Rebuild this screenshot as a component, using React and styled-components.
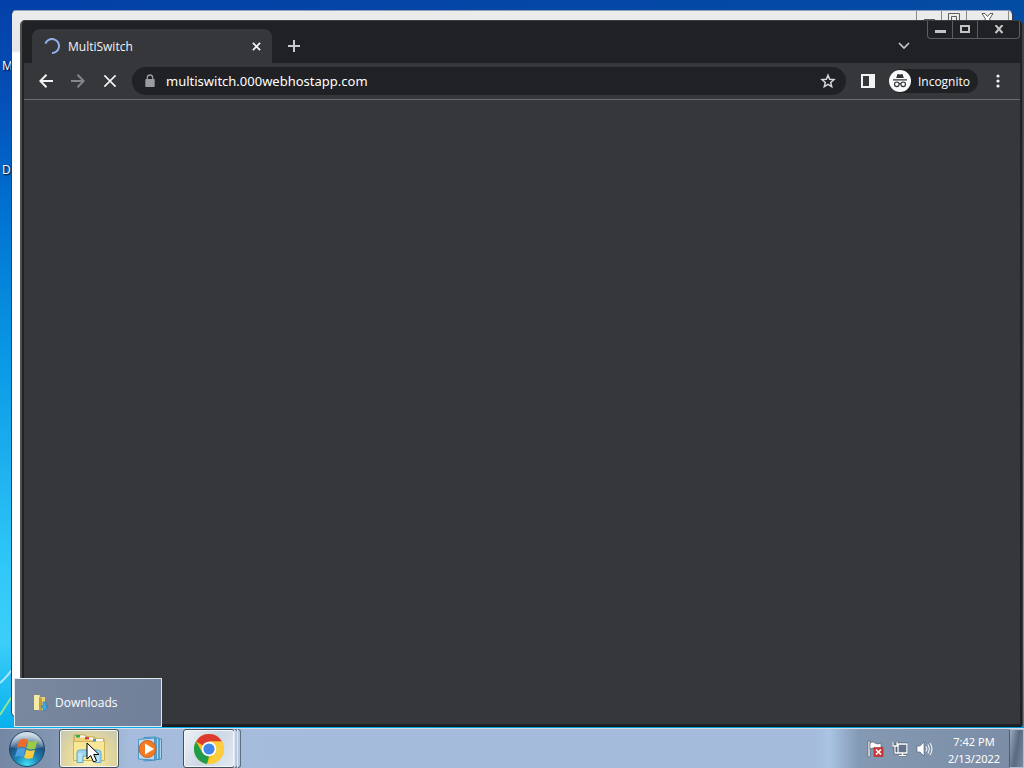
import React from 'react';
import styled, { createGlobalStyle, keyframes } from 'styled-components';

const GlobalStyle = createGlobalStyle`
  * { box-sizing: border-box; }
  html, body { margin: 0; }
  body { font-family: "Open Sans", "Noto Sans", sans-serif; overflow: hidden; }
  button, input { font: inherit; color: inherit; border: 0; background: none; padding: 0; margin: 0; }
  svg { display: block; flex: none; }
`;

const Screen = styled.div`
  height: 100vh;
  display: flex;
  flex-direction: column;
`;

const Desktop = styled.main`
  position: relative;
  flex: 1;
  min-height: 0;
  overflow: hidden;
  background:
    linear-gradient(90deg, transparent 0%, rgba(0, 100, 150, 0.3) 100%),
    linear-gradient(#0440a8 0%, #0450b8 14%, #0070d0 28%, #0a9ae6 50%, #30c8f8 78%, #3ccefa 88%, #08b0ec 100%);
`;

const Streaks = styled.svg`
  position: absolute;
  left: 0;
  bottom: 0;
`;

const DesktopIcon = styled.span`
  position: absolute;
  left: ${(p) => p.$x}px;
  top: ${(p) => p.$y}px;
  font-size: 12px;
  line-height: 16px;
  color: #fff;
  text-shadow: 1px 1px 2px #000;
`;

const BackWindow = styled.section`
  position: absolute;
  inset: 10px 11px 11px;
  border: 1px solid #333f4c;
  border-top-color: #8fa3bb;
  border-radius: 5px;
  background: linear-gradient(#ececec 0, #e6e6e8 40px, #fff 42px);
  overflow: hidden;
`;

const CaptionButtons = styled.div`
  display: flex;
  justify-content: flex-end;
  height: ${(p) => (p.$dark ? 18 : 16)}px;
  position: absolute;
  top: 0;
  right: ${(p) => (p.$dark ? 2 : 3)}px;
  color: ${(p) => (p.$dark ? '#c4c5c7' : '#5c5c5c')};
`;

const CaptionButton = styled.button`
  display: flex;
  align-items: center;
  justify-content: center;
  width: ${(p) => (p.$wide ? 43 : 26)}px;
  border: 1px solid ${(p) => (p.$dark ? '#5c5d60' : '#8a8a8a')};
  border-top: 0;
  margin-left: -1px;
  &:first-child { border-bottom-left-radius: 4px; }
  &:last-child { border-bottom-right-radius: 4px; }
`;

const Browser = styled.section`
  position: absolute;
  inset: 20px 1px 1px 20px;
  display: flex;
  flex-direction: column;
  border: 1px solid #3c3f42;
  border-left: 2px solid #505256;
  border-bottom-color: #17191c;
  border-radius: 5px 5px 3px 3px;
  background: #202124;
  padding: 0 2px 2px;
  overflow: hidden;
`;

const TabStrip = styled.div`
  display: flex;
  align-items: center;
  height: 42px;
  padding: 8px 0 0 8px;
`;

const Tab = styled.div`
  display: flex;
  align-items: center;
  width: 240px;
  height: 34px;
  padding: 0 8px 0 12px;
  border-radius: 8px 8px 0 0;
  background: #36373b;
  color: #f2f3f5;
  font-size: 12px;
`;

const spin = keyframes`to { transform: rotate(360deg); }`;

const Spinner = styled.svg`
  animation: ${spin} 1.4s linear infinite;
  animation-play-state: paused;
`;

const TabTitle = styled.span`
  flex: 1;
  margin-left: 8px;
`;

const IconButton = styled.button`
  display: flex;
  align-items: center;
  justify-content: center;
  width: ${(p) => p.$size || 16}px;
  height: ${(p) => p.$size || 16}px;
  color: ${(p) => (p.$dim ? '#85868a' : '#f1f3f4')};
  flex: none;
`;

const NewTab = styled(IconButton)`
  margin-left: 8px;
  color: #c9cacd;
`;

const TabSearch = styled(IconButton)`
  margin-left: auto;
  margin-right: 102px;
`;

const Toolbar = styled.div`
  display: flex;
  align-items: center;
  height: 37px;
  padding: 0 14px 0 8px;
  background: #36373b;
  border-bottom: 1px solid #6a6b6e;
`;

const Navigation = styled.nav`
  display: flex;
  gap: 4px;
  margin-right: 8px;
`;

const AddressBar = styled.div`
  display: flex;
  align-items: center;
  flex: 1;
  height: 28px;
  padding: 0 10px;
  border-radius: 14px;
  background: #202124;
  color: #9a9b9e;
`;

const AddressInput = styled.input`
  flex: 1;
  min-width: 0;
  margin-left: 8px;
  color: #fff;
  font-family: "Noto Sans", sans-serif;
  font-size: 13px;
  line-height: 20px;
  outline: 0;
`;

const SidePanelButton = styled(IconButton)`
  margin: 0 13px 0 14px;
`;

const Incognito = styled.button`
  display: flex;
  align-items: center;
  gap: 7px;
  height: 24px;
  padding-right: 8px;
  border-radius: 12px;
  background: #202124;
  color: #fff;
  font-size: 12px;
  margin-right: 12px;
`;

const Page = styled.div`
  flex: 1;
  background: #36373b;
`;

const Preview = styled.button`
  position: absolute;
  left: 14px;
  bottom: 1px;
  width: 148px;
  height: 49px;
  display: flex;
  align-items: center;
  gap: 6px;
  padding-left: 18px;
  border: 1px solid #dfe6ef;
  background: linear-gradient(100deg, #79889d, #71809a);
  color: #fff;
  font-size: 12px;
`;

const Taskbar = styled.footer`
  display: flex;
  align-items: stretch;
  height: 40px;
  flex: none;
  border-top: 1px solid #d5deea;
  background: linear-gradient(90deg, #7387a2 0, #8295b0 50px, #a6bcdc 130px, #a4bbdc calc(100% - 210px), #a9c4e4 calc(100% - 195px), #8499b3 calc(100% - 165px), #7b8ca5 100%);
`;

const StartButton = styled.button`
  width: 54px;
  display: flex;
  align-items: center;
  justify-content: center;
  margin-right: 5px;
`;

const TaskButton = styled.button`
  display: flex;
  align-items: center;
  justify-content: center;
  width: ${(p) => p.$width || 60}px;
  border: 1px solid ${(p) => (p.$state ? '#44505e' : 'transparent')};
  border-radius: 3px;
  box-shadow: ${(p) => (p.$state ? 'inset 0 0 0 1px #f3f5f6' : 'none')};
  background: ${(p) =>
    p.$state === 'hover'
      ? 'radial-gradient(circle at 50% 80%, #fff3b4, #e2d79c 55%, #c4c6b4)'
      : p.$state === 'active'
        ? 'linear-gradient(120deg, #eef2f7, #cbd7e5 50%, #e2e9f1)'
        : 'none'};
`;

const StackEdge = styled.span`
  width: 4px;
  margin-left: -1px;
  border: 1px solid #5c6c80;
  border-left-color: #dfe7f0;
  border-radius: 0 3px 3px 0;
  background: #b9c9df;
`;

const Tray = styled.div`
  display: flex;
  align-items: center;
  gap: 8px;
  margin-left: auto;
  margin-right: 13px;
`;

const Clock = styled.time`
  width: 56px;
  padding-top: 4px;
  margin-right: 7px;
  text-align: center;
  white-space: nowrap;
  color: #fff;
  font-family: "Noto Sans", sans-serif;
  font-size: 11px;
  line-height: 17px;
`;

const ShowDesktop = styled.button`
  width: 15px;
  border: 1px solid #aebccd;
  border-left-color: #4d5d72;
  background: linear-gradient(100deg, #9aabbf, #5a6b81 50%, #7889a0);
`;

const X = ({ size = 8, width = 2 }) => (
  <svg width={size} height={size} viewBox="0 0 10 10" fill="none" stroke="currentColor" strokeWidth={width}>
    <path d="M1 1l8 8M9 1l-8 8" />
  </svg>
);

function Captions({ dark }) {
  return (
    <CaptionButtons $dark={dark}>
      <CaptionButton $dark={dark} aria-label="Minimize">
        <svg width="11" height="12"><path d="M0 6h11v3H0z" fill="currentColor" /></svg>
      </CaptionButton>
      <CaptionButton $dark={dark} aria-label="Maximize">
        {dark ? (
          <svg width="10" height="9"><path d="M1 1h8v6H1z" fill="none" stroke="currentColor" strokeWidth="2" /></svg>
        ) : (
          <svg width="12" height="12" fill="none" stroke="currentColor"><path d="M.5 .5h11v11H.5zM3.5 3.5h5v5h-5z" /></svg>
        )}
      </CaptionButton>
      <CaptionButton $dark={dark} $wide aria-label="Close">
        {dark ? (
          <svg width="10" height="10" viewBox="0 0 10 10" fill="none" stroke="currentColor" strokeWidth="2">
            <path d="M1.500 0L8.500 8M8.500 0L1.500 8" />
          </svg>
        ) : (
          <svg width="13" height="12" viewBox="0 0 13 12" fill="#fff" stroke="currentColor">
            <path d="M1 .5h3l2.500 3L9 .5h3L8.500 6l3.500 5.500H9L6.500 8.500 4 11.500H1L4.500 6z" />
          </svg>
        )}
      </CaptionButton>
    </CaptionButtons>
  );
}

const IncognitoIcon = () => (
  <svg width="22" height="22" viewBox="0 0 22 22">
    <circle cx="11" cy="11" r="11" fill="#f8f9fa" />
    <path d="M7.200 8l1.100-3.600q.2-.6.8-.4l1.900.5 1.900-.5q.6-.2.800.4L14.800 8z" fill="#303238" />
    <path d="M4 9.800h14" stroke="#303238" strokeWidth="1.200" />
    <g fill="none" stroke="#303238" strokeWidth="1.100">
      <circle cx="7.800" cy="14.300" r="2.300" /><circle cx="14.200" cy="14.300" r="2.300" /><path d="M10 14q1-.7 2 0" />
    </g>
  </svg>
);

const FolderSmall = () => (
  <svg width="16" height="18" viewBox="0 0 16 18">
    <path d="M1 1h6v2h5v13H1z" fill="#e9cf72" />
    <path d="M1 1h5v15H1z" fill="#f7e9a6" />
    <path d="M6 3l3 1v12l-3 1z" fill="#c29d3c" />
    <path d="M10 8h3v4h2l-3.500 5L8 12h2z" fill="#41aee8" stroke="#1974b4" strokeWidth=".6" />
  </svg>
);

const StartIcon = () => (
  <svg width="38" height="38" viewBox="0 0 38 38">
    <defs>
      <radialGradient id="orb" cx="50%" cy="95%" r="85%">
        <stop offset="0" stopColor="#43e0f4" /><stop offset=".4" stopColor="#1b85b8" />
        <stop offset=".75" stopColor="#204f7c" /><stop offset="1" stopColor="#8ca9c0" />
      </radialGradient>
      <linearGradient id="shine" x2="0" y2="1">
        <stop offset="0" stopColor="#fff" stopOpacity=".65" /><stop offset="1" stopColor="#fff" stopOpacity=".1" />
      </linearGradient>
    </defs>
    <circle cx="19" cy="19" r="17.500" fill="url(#orb)" stroke="#22476a" />
    <path d="M3 17a16 15 0 0 1 32 0q-16 5-32 0z" fill="url(#shine)" />
    <path d="M11 10.500q4-3 8.500-.8l-2 8q-4-2-8.500.3z" fill="#ee6a2c" />
    <path d="M20.500 10.400q4 2.400 9 .2l-2.200 8q-4.500 2-8.800-.4z" fill="#9bcb45" />
    <path d="M9.200 19.200q4-2.400 8.200-.2l-2.200 8q-4-2-8.300.4z" fill="#4b9fe0" />
    <path d="M18.300 19.600q4 2.300 8.700.2l-2.200 8q-4.500 2.200-8.700-.2z" fill="#fccb3f" />
  </svg>
);

const ExplorerIcon = () => (
  <svg width="34" height="32" viewBox="0 0 34 32">
    <path d="M2 2h11l2 2h7l2 2h8v20H2z" fill="#f0d37a" stroke="#b99a48" />
    <path d="M1.500 8.500h31v19h-31z" fill="#f8e796" stroke="#d0b35a" />
    <path d="M6 2.500h7v2H6zM14 4.500h7v2h-7zM23 6h8v2.500h-8z" fill="#fff" />
    <path d="M4 2h4v2.500H4z" fill="#32ad52" /><path d="M13 4h4v2.500h-4z" fill="#d9463b" /><path d="M21 6h3v2.500h-3z" fill="#3e9ad8" />
    <path d="M5 29.500V20q0-3 3-3h18q3 0 3 3v9.500h-6V23H11v6.500z" fill="#9ed5ee" stroke="#5caed3" />
    <path d="M7 20v9M9 20v9M26 20v9" stroke="#d9f4fb" />
  </svg>
);

const MediaIcon = () => (
  <svg width="28" height="26" viewBox="0 0 28 26">
    <path d="M7 1.500l12-.5v23l-12 1zM19 2h3v21.500h-3zM22 3h2.500v20H22z" fill="#a9d3ee" stroke="#3f8fc0" />
    <path d="M1.500 3.500l16-1.500v22l-16-1z" fill="#b8dcf2" stroke="#4c94c2" />
    <circle cx="10.500" cy="13" r="8.500" fill="#ef7b24" stroke="#d45d16" />
    <path d="M8 7.500v11l9-5.500z" fill="#fff" />
  </svg>
);

const ChromeIcon = () => (
  <svg width="30" height="30" viewBox="0 0 30 30">
    <circle cx="15" cy="15" r="15" fill="#fbc116" />
    <path d="M15 15L2 7.500A15 15 0 0 1 28 7.500H15z" fill="#dc3b30" />
    <path d="M2 7.500l6.500 11.300L15 22.500l-2 7.400A15 15 0 0 1 2 7.500z" fill="#229a4b" />
    <path d="M15 7.500h13A15 15 0 0 1 13 29.900l8.500-11.200z" fill="#fcce3e" />
    <circle cx="15" cy="15" r="7.300" fill="#fff" /><circle cx="15" cy="15" r="5.600" fill="#4285e8" />
  </svg>
);

const Cursor = styled.svg`
  position: fixed;
  left: 86px;
  top: 742px;
  pointer-events: none;
`;

export default function App() {
  return (
    <Screen>
      <GlobalStyle />
      <Desktop>
        <Streaks width="16" height="70" fill="none">
          <path d="M0 25Q8 18 16 6" stroke="#aee8ff" strokeWidth="2" />
          <path d="M0 57Q8 44 14 36" stroke="#90e694" strokeWidth="2" />
        </Streaks>
        <DesktopIcon $x={2} $y={58}>M</DesktopIcon>
        <DesktopIcon $x={2} $y={162}>D</DesktopIcon>
        <BackWindow><Captions /></BackWindow>
        <Browser>
          <Captions dark />
          <TabStrip>
            <Tab>
              <Spinner width="16" height="16" viewBox="0 0 16 16" fill="none" stroke="#91aee8" strokeWidth="2">
                <path d="M1.400 5.700A7 7 0 1 1 8 15" />
              </Spinner>
              <TabTitle>MultiSwitch</TabTitle>
              <IconButton aria-label="Close tab"><X size={9} /></IconButton>
            </Tab>
            <NewTab $size={28} aria-label="New tab">
              <svg width="12" height="12" stroke="currentColor" strokeWidth="2"><path d="M6 0v12M0 6h12" /></svg>
            </NewTab>
            <TabSearch $size={28} aria-label="Search tabs">
              <svg width="12" height="8" fill="none" stroke="#c9cacd" strokeWidth="1.600"><path d="M1 1l5 5 5-5" /></svg>
            </TabSearch>
          </TabStrip>
          <Toolbar>
            <Navigation>
              <IconButton $size={28} aria-label="Back">
                <svg width="14" height="14" fill="none" stroke="currentColor" strokeWidth="2"><path d="M14 7H1.500M7.500 .8L1.300 7l6.200 6.200" /></svg>
              </IconButton>
              <IconButton $size={28} $dim aria-label="Forward">
                <svg width="14" height="14" fill="none" stroke="currentColor" strokeWidth="2"><path d="M0 7h12.500M6.500 .8L12.700 7l-6.200 6.200" /></svg>
              </IconButton>
              <IconButton $size={28} aria-label="Stop loading"><X size={14} width={1.2} /></IconButton>
            </Navigation>
            <AddressBar>
              <svg width="16" height="16" viewBox="0 0 16 16">
                <path d="M4 6h8q.7 0 .7.700v6.600q0 .7-.7.700H4q-.7 0-.7-.700V6.700Q3.300 6 4 6z" fill="currentColor" />
                <path d="M5.300 6.500V4.700a2.700 2.700 0 0 1 5.400 0v1.800" fill="none" stroke="currentColor" strokeWidth="1.300" />
              </svg>
              <AddressInput aria-label="Address" defaultValue="multiswitch.000webhostapp.com" />
              <IconButton aria-label="Bookmark">
                <svg width="16" height="16" viewBox="0 0 16 16" fill="none" stroke="#d5d6d9" strokeWidth="1.500">
                  <path d="M8 2.200l1.700 4 4.300.4-3.300 2.800 1 4.200L8 11.400l-3.700 2.200 1-4.200L2 6.600l4.300-.4z" />
                </svg>
              </IconButton>
            </AddressBar>
            <SidePanelButton aria-label="Side panel">
              <svg width="14" height="14"><path d="M1 1h12v12H1z" fill="none" stroke="currentColor" strokeWidth="2" /><path d="M8 1h5v12H8z" fill="currentColor" /></svg>
            </SidePanelButton>
            <Incognito><IncognitoIcon />Incognito</Incognito>
            <IconButton aria-label="Menu">
              <svg width="4" height="14" fill="currentColor"><circle cx="2" cy="2" r="1.600" /><circle cx="2" cy="7" r="1.600" /><circle cx="2" cy="12" r="1.600" /></svg>
            </IconButton>
          </Toolbar>
          <Page />
        </Browser>
        <Preview><FolderSmall />Downloads</Preview>
      </Desktop>
      <Taskbar>
        <StartButton aria-label="Start"><StartIcon /></StartButton>
        <TaskButton $state="hover" aria-label="Windows Explorer"><ExplorerIcon /></TaskButton>
        <TaskButton $width={64} aria-label="Media Player"><MediaIcon /></TaskButton>
        <TaskButton $state="active" $width={52} aria-label="Chrome"><ChromeIcon /></TaskButton>
        <StackEdge /><StackEdge />
        <Tray>
          <svg width="17" height="18" viewBox="0 0 17 18">
            <path d="M1 1h2v16H1z" fill="#fff" stroke="#3f4e61" strokeWidth=".6" />
            <path d="M3 3q3-2 5 0t6 0v6q-4 2-6 0T3 9z" fill="#fff" stroke="#46566b" strokeWidth=".6" />
            <path d="M7 7.500h9v9H7z" fill="#d23a3a" stroke="#9c2a2e" strokeWidth=".6" /><path d="M9 9.500l5 5M14 9.500l-5 5" stroke="#fff" strokeWidth="1.600" />
          </svg>
          <svg width="16" height="18" viewBox="0 0 16 18" fill="none">
            <path d="M6.500 4.500h8v8h-8z" fill="#5c6b7e" stroke="#3a4655" strokeWidth="3" />
            <path d="M6 4h9v9H6zM7 15.500h7M10.500 13v3M1 2v4h4V2M3 6v7h3" stroke="#3a4655" strokeWidth="2.600" />
            <path d="M6 4h9v9H6z" fill="#64748a" />
            <path d="M6 4h9v9H6zM7 15.500h7M10.500 13v3M1 2v4h4V2M3 6v7h3" stroke="#fff" strokeWidth="1.300" />
          </svg>
          <svg width="17" height="16" viewBox="0 0 17 16" fill="none" stroke="#fff">
            <path d="M1 5h3l4-4v14l-4-4H1z" fill="#fff" stroke="#4b5a6e" strokeWidth=".6" /><path d="M10 5.500q1.800 2.500 0 5M12 3.500q3 4.500 0 9M14 2q4 6 0 12" />
          </svg>
        </Tray>
        <Clock>7:42 PM<br />2/13/2022</Clock>
        <ShowDesktop aria-label="Show desktop" />
      </Taskbar>
      <Cursor width="14" height="21" viewBox="0 0 14 21">
        <path d="M1 1v16l3.700-3.500L7.500 20l3-1.300-2.800-6.200H13z" fill="#fff" stroke="#000" />
      </Cursor>
    </Screen>
  );
}
